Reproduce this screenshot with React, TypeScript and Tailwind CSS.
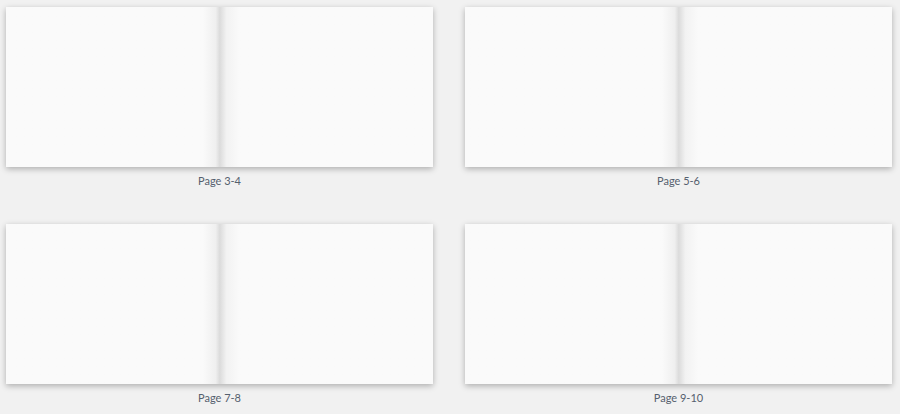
import React from 'react';

const spreads = ['Page 3-4', 'Page 5-6', 'Page 7-8', 'Page 9-10'];

function Spread({ label }: { label: string }) {
  return (
    <div className="flex flex-col items-center">
      <div className="flex w-full h-[160px] bg-[#fafafa] shadow-[0_2px_6px_rgba(0,0,0,0.28)]">
        {/* left page, shading into the gutter */}
        <div className="flex-1 bg-gradient-to-r from-[#fafafa] from-92% via-[#efefef] via-98% to-[#dadada]" />
        {/* right page */}
        <div className="flex-1 bg-gradient-to-r from-[#dcdcdc] via-[#f2f2f2] via-3% to-[#fafafa] to-9%" />
      </div>
      <div className="mt-[7px] text-[11px] leading-[14px] text-[#55606e] font-['Lato','Liberation_Sans',sans-serif]">
        {label}
      </div>
    </div>
  );
}

export default function App() {
  return (
    <div className="min-h-screen w-full bg-[#f1f1f1] overflow-hidden">
      <div className="grid grid-cols-2 gap-x-[32px] gap-y-[36px] pl-[6px] pr-[8px] pt-[7px]">
        {spreads.map((s) => (
          <Spread key={s} label={s} />
        ))}
      </div>
    </div>
  );
}
